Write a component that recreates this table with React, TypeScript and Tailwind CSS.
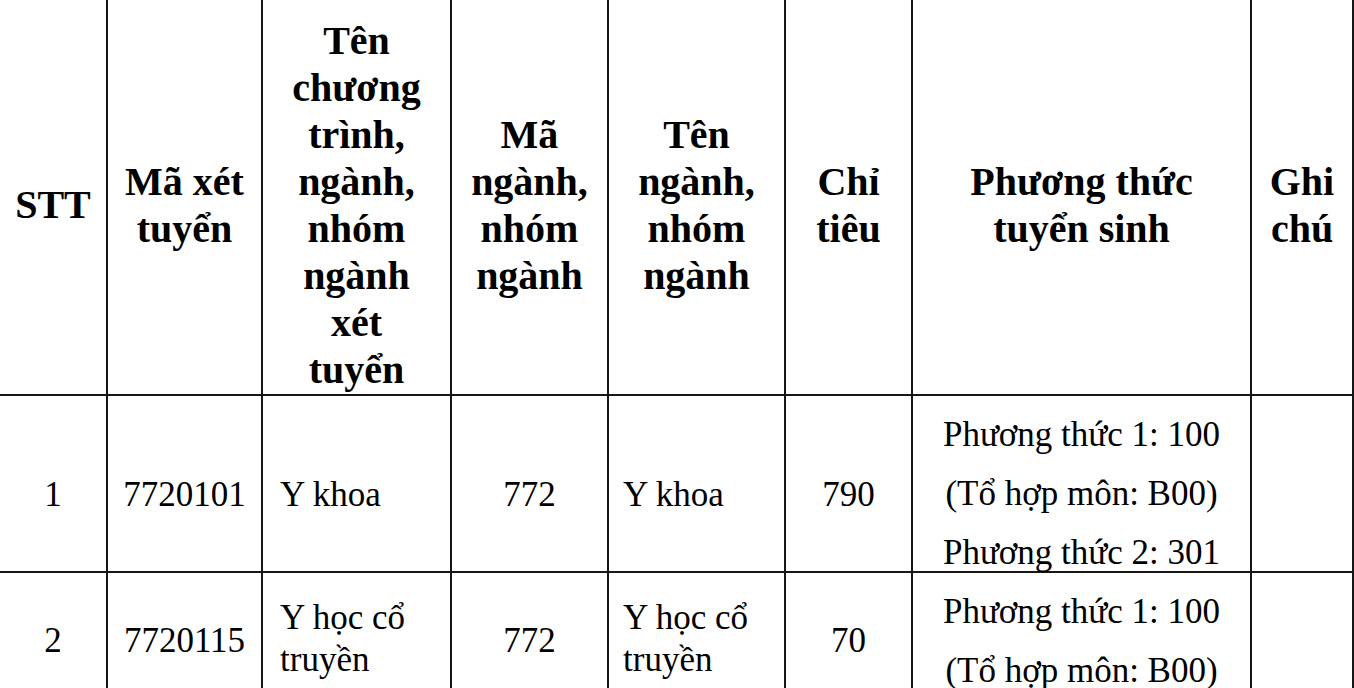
const serif = { fontFamily: '"Liberation Serif", "Times New Roman", serif' };

const HEADERS: string[][] = [
    ["STT"],
    ["Mã xét", "tuyển"],
    ["Tên", "chương", "trình,", "ngành,", "nhóm", "ngành", "xét", "tuyển"],
    ["Mã", "ngành,", "nhóm", "ngành"],
    ["Tên", "ngành,", "nhóm", "ngành"],
    ["Chỉ", "tiêu"],
    ["Phương thức", "tuyển sinh"],
    ["Ghi", "chú"],
];

const cell = "border-r-2 border-b-2 border-[#161616] text-black";

function HeaderCell({ lines }: { lines: string[] }) {
    return (
        <div className={`${cell} flex flex-col items-center justify-center pt-[15px] text-center text-[40px] font-bold leading-[47px]`}>
            {lines.map((line, i) => (
                <div key={i} className="whitespace-nowrap">
                    {line}
                </div>
            ))}
        </div>
    );
}

function Methods({ lines }: { lines: string[] }) {
    return (
        <div className={`${cell} flex flex-col items-center pt-[9px] text-center text-[35px] leading-[59px]`}>
            {lines.map((line, i) => (
                <div key={i} className="whitespace-nowrap">
                    {line}
                </div>
            ))}
        </div>
    );
}

export default function App() {
    return (
        <div className="h-[688px] w-[1354px] overflow-hidden bg-white" style={serif}>
            <div className="grid grid-cols-[108px_155px_189px_157px_177px_127px_339px_102px] grid-rows-[396px_177px_180px]">
                {HEADERS.map((lines, i) => (
                    <HeaderCell key={i} lines={lines} />
                ))}

                {/* Row 1 */}
                <div className={`${cell} flex items-center justify-center pt-[22px] text-[35px] leading-[59px]`}>1</div>
                <div className={`${cell} flex items-center justify-center pt-[22px] text-[35px] leading-[59px]`}>7720101</div>
                <div className={`${cell} flex items-center pl-[17px] pt-[22px] text-[35px] leading-[59px]`}>Y khoa</div>
                <div className={`${cell} flex items-center justify-center pt-[22px] text-[35px] leading-[59px]`}>772</div>
                <div className={`${cell} flex items-center pl-[14px] pt-[22px] text-[35px] leading-[59px]`}>Y khoa</div>
                <div className={`${cell} flex items-center justify-center pt-[22px] text-[35px] leading-[59px]`}>790</div>
                <Methods lines={["Phương thức 1: 100", "(Tổ hợp môn: B00)", "Phương thức 2: 301"]} />
                <div className={cell} />

                {/* Row 2 */}
                <div className={`${cell} pt-[48px] text-center text-[35px] leading-[39px]`}>2</div>
                <div className={`${cell} pt-[48px] text-center text-[35px] leading-[39px]`}>7720115</div>
                <div className={`${cell} pl-[17px] pt-[24px] text-[35px] leading-[42px]`}>
                    <div>Y học cổ</div>
                    <div>truyền</div>
                </div>
                <div className={`${cell} pt-[48px] text-center text-[35px] leading-[39px]`}>772</div>
                <div className={`${cell} pl-[14px] pt-[24px] text-[35px] leading-[42px]`}>
                    <div>Y học cổ</div>
                    <div>truyền</div>
                </div>
                <div className={`${cell} pt-[48px] text-center text-[35px] leading-[39px]`}>70</div>
                <Methods lines={["Phương thức 1: 100", "(Tổ hợp môn: B00)"]} />
                <div className={cell} />
            </div>
        </div>
    );
}
